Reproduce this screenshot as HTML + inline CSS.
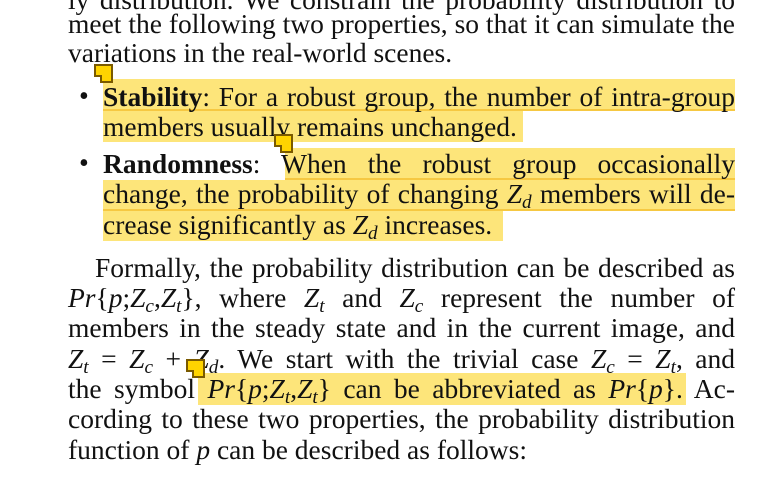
<!DOCTYPE html>
<html><head><meta charset="utf-8"><style>
body{margin:0;width:761px;height:477px;background:#fff;overflow:hidden;position:relative;font-family:"Liberation Serif",serif;font-size:27.5px;color:#111}
.l{position:absolute;left:68px;width:667px;height:30px;line-height:30px;white-space:nowrap;text-align:justify;text-align-last:justify}
.b{left:103px;width:632px}
.hl{position:absolute;background:#fde57a}
.hl2{position:absolute;height:2px;background:#f6c842}
i{font-style:italic}
sub{font-size:0.7em;vertical-align:-0.25em;line-height:0;font-style:italic}
.note{position:absolute;width:19px;height:19px;background:#ffd400;border:2px solid #7a5a00;box-sizing:border-box}
.note:after{content:"";position:absolute;left:-2px;bottom:-2px;width:8px;height:8px;background:#fff;border-top:2px solid #7a5a00;border-right:2px solid #7a5a00;box-sizing:border-box}
.dot{position:absolute;left:79px;font-size:28px}
</style></head><body>
<div class="hl" style="left:103px;top:79px;width:632px;height:32px"></div>
<div class="hl2" style="left:103px;top:109px;width:632px"></div>
<div class="hl" style="left:103px;top:111px;width:420px;height:31px"></div>
<div class="hl" style="left:285px;top:148px;width:450px;height:32px"></div>
<div class="hl2" style="left:285px;top:178px;width:450px"></div>
<div class="hl" style="left:103px;top:180px;width:632px;height:31px"></div>
<div class="hl2" style="left:103px;top:209px;width:632px"></div>
<div class="hl" style="left:103px;top:211px;width:400px;height:30px"></div>
<div class="hl" style="left:198px;top:373px;width:488px;height:32px"></div>

<div class="l" style="top:-15px">ly distribution. We constrain the probability distribution to</div>
<div class="l" style="top:9px">meet the following two properties, so that it can simulate the</div>
<div class="l" style="top:38px;width:auto;text-align-last:auto">variations in the real-world scenes.</div>
<div class="dot" style="top:82px;line-height:30px">•</div>
<div class="l b" style="top:82px"><b>Stability</b>: For a robust group, the number of intra-group</div>
<div class="l b" style="top:112px;width:auto;text-align-last:auto">members usually remains unchanged.</div>
<div class="dot" style="top:149px;line-height:30px">•</div>
<div class="l b" style="top:149px"><b>Randomness</b>: When the robust group occasionally</div>
<div class="l b" style="top:179px">change, the probability of changing <i>Z</i><sub>d</sub> members will de-</div>
<div class="l b" style="top:210px;width:auto;text-align-last:auto">crease significantly as <i>Z</i><sub>d</sub> increases.</div>
<div class="l" style="top:253px;left:95px;width:640px">Formally, the probability distribution can be described as</div>
<div class="l" style="top:283px"><i>Pr</i>{<i>p</i>;<i>Z</i><sub>c</sub>,<i>Z</i><sub>t</sub>}, where <i>Z</i><sub>t</sub> and <i>Z</i><sub>c</sub> represent the number of</div>
<div class="l" style="top:313px">members in the steady state and in the current image, and</div>
<div class="l" style="top:344px"><i>Z</i><sub>t</sub> = <i>Z</i><sub>c</sub> + <i>Z</i><sub>d</sub>. We start with the trivial case <i>Z</i><sub>c</sub> = <i>Z</i><sub>t</sub>, and</div>
<div class="l" style="top:374px">the symbol <i>Pr</i>{<i>p</i>;<i>Z</i><sub>t</sub>,<i>Z</i><sub>t</sub>} can be abbreviated as <i>Pr</i>{<i>p</i>}. Ac-</div>
<div class="l" style="top:404px">cording to these two properties, the probability distribution</div>
<div class="l" style="top:435px;width:auto;text-align-last:auto">function of <i>p</i> can be described as follows:</div>

<div class="note" style="left:94px;top:64px"></div>
<div class="note" style="left:274px;top:134px"></div>
<div class="note" style="left:186px;top:359px"></div>
</body></html>
